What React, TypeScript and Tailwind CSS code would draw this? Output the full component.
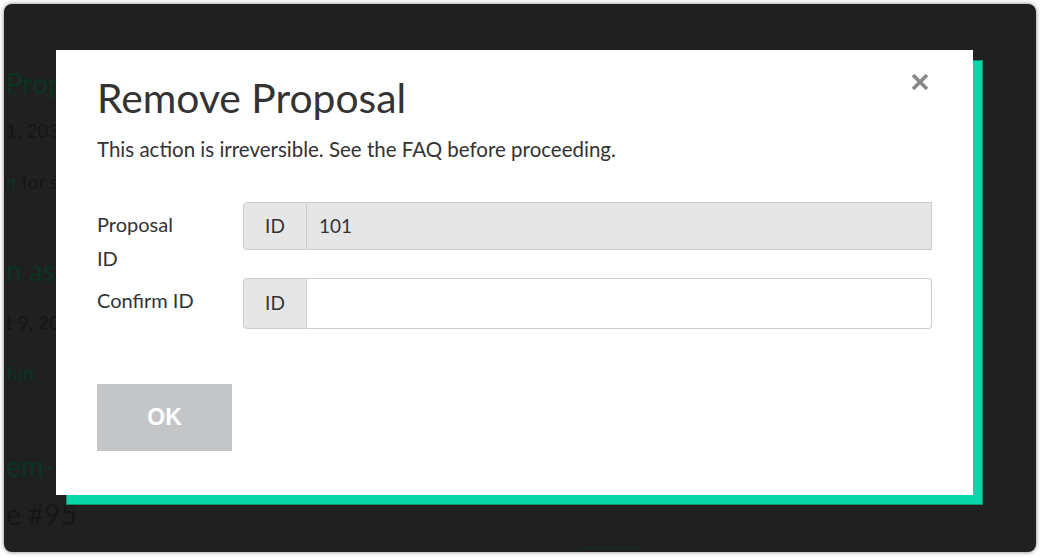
import React from "react";

export default function App() {
  return (
    <div className="w-[1043px] h-[558px] bg-white p-[4px] pr-[7px] pb-[6px]" style={{ fontFamily: "Lato, 'Noto Sans', sans-serif" }}>
      <div className="relative w-full h-full bg-[#202020] rounded-[8px] overflow-hidden shadow-[0_0_4px_rgba(0,0,0,0.5)]">
        {/* dimmed background page */}
        <div className="flex flex-col whitespace-nowrap pl-[2px] pt-[62px]">
          <div className="text-[28px] leading-[34px] text-[#0b3422]">Proposal</div>
          <div className="mt-[19px] text-[19px] leading-[24px] text-[#161616]">1, 2032</div>
          <div className="mt-[27px] text-[19px] leading-[24px] text-[#161616]"><span className="text-[#0b3422]">n</span> for s</div>
          <div className="mt-[59px] text-[28px] leading-[34px] text-[#0b3422]">n as a</div>
          <div className="mt-[24px] text-[19px] leading-[24px] text-[#161616]">t 9, 2032</div>
          <div className="mt-[26px] text-[19px] leading-[24px] text-[#0b3422]">fun</div>
          <div className="mt-[64px] text-[28px] leading-[34px] text-[#0b3422]">em-</div>
          <div className="mt-[14px] text-[28px] leading-[34px] text-[#161616]">e #95</div>
        </div>
        <div className="absolute left-[572px] bottom-[-6px] w-[66px] h-[10px] rounded-[6px] border border-[#0d3321]" />

        {/* modal */}
        <div className="absolute left-[52px] top-[46px]">
          <div className="relative">
            <div className="absolute left-[10px] top-[10px] w-[917px] h-[445px] bg-[#06d6a8] border border-[#14916f]" />
            <div className="relative w-[917px] h-[445px] bg-white px-[41px] pt-[24px] text-[#333]">
              <button className="absolute right-[41px] top-[20px] w-[24px] h-[24px] flex items-center justify-center">
                <svg width="20" height="20" viewBox="0 0 20 20">
                  <path d="M3 3 L17 17 M17 3 L3 17" stroke="#888" strokeWidth="3.6" strokeLinecap="butt" />
                </svg>
              </button>
              <h1 className="text-[40.8px] leading-[48px] font-normal text-[#333]">Remove Proposal</h1>
              <p className="mt-[14px] text-[20.5px] leading-[26px] text-[#333]">This action is irreversible. See the FAQ before proceeding.</p>

              <div className="mt-[40px] flex flex-col gap-[3px]">
                <div className="flex items-start">
                  <label className="w-[146px] pr-[47px] pt-[5px] text-[20px] leading-[34px]">Proposal ID</label>
                  <div className="flex flex-1 h-[48px]">
                    <div className="w-[64px] flex items-center justify-center bg-[#e6e6e6] border border-[#ccc] rounded-l-[4px] text-[19px]">ID</div>
                    <div className="flex-1 flex items-center px-[12px] bg-[#e6e6e6] border border-l-0 border-[#ccc] text-[19px]">101</div>
                  </div>
                </div>
                <div className="flex items-start">
                  <label className="w-[146px] pr-[47px] pt-[5px] text-[20px] leading-[34px] whitespace-nowrap">Confirm ID</label>
                  <div className="flex flex-1 h-[51px]">
                    <div className="w-[64px] flex items-center justify-center bg-[#e6e6e6] border border-[#ccc] rounded-l-[4px] text-[19px]">ID</div>
                    <input className="flex-1 px-[12px] bg-white border border-l-0 border-[#ccc] rounded-r-[4px] outline-none" />
                  </div>
                </div>
              </div>

              <button className="mt-[55px] w-[135px] h-[67px] bg-[#c4c5c7] text-white text-[23px] font-bold" style={{ fontFamily: "'Liberation Sans', Arial, sans-serif" }}>OK</button>
            </div>
          </div>
        </div>
      </div>
    </div>
  );
}
